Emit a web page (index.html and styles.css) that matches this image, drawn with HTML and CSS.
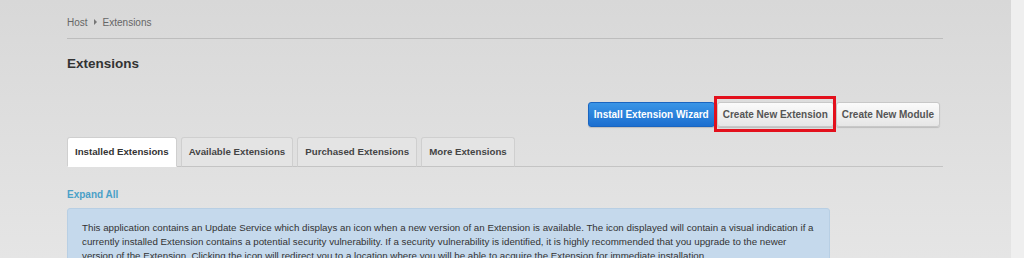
FILE: index.html
```html
<!DOCTYPE html>
<html lang="en">
<head>
    <meta charset="UTF-8">
    <title>Extensions</title>
    <link rel="stylesheet" href="styles.css">
</head>
<body>
    <div class="page">
        <div class="main">
            <div class="breadcrumb">
                <span>Host</span>
                <span class="sep"></span>
                <span>Extensions</span>
            </div>

            <h1>Extensions</h1>

            <div class="actions">
                <button class="btn btn-primary">Install Extension Wizard</button>
                <span class="highlight"><button class="btn">Create New Extension</button></span>
                <button class="btn">Create New Module</button>
            </div>

            <ul class="tabs">
                <li class="tab active">Installed Extensions</li>
                <li class="tab">Available Extensions</li>
                <li class="tab">Purchased Extensions</li>
                <li class="tab">More Extensions</li>
            </ul>

            <a class="expand" href="#">Expand All</a>

            <div class="info">
                This application contains an Update Service which displays an icon when a new version of an Extension is available. The icon displayed will contain a visual indication if a currently installed Extension contains a potential security vulnerability. If a security vulnerability is identified, it is highly recommended that you upgrade to the newer version of the Extension. Clicking the icon will redirect you to a location where you will be able to acquire the Extension for immediate installation.
            </div>
        </div>
        <div class="side"></div>
    </div>
</body>
</html>
```

FILE: styles.css
```css
body {
    margin: 0;
    font-family: 'Liberation Sans', Arial, sans-serif;
    color: #333;
    overflow: hidden;
}

.page {
    display: flex;
    height: 258px;
}

.main {
    flex: 1;
    padding: 0 68px 0 67px;
    background: linear-gradient(#d8d8d8, #e5e5e5);
    overflow: hidden;
}

.side {
    width: 13px;
    background: #efefef;
}

.breadcrumb {
    display: flex;
    align-items: center;
    gap: 6px;
    height: 39px;
    padding-top: 6px;
    box-sizing: border-box;
    border-bottom: 1px solid #bdbdbd;
    font-size: 10px;
    color: #666;
}

.sep {
    width: 0;
    height: 0;
    border-left: 3px solid #777;
    border-top: 3px solid transparent;
    border-bottom: 3px solid transparent;
}

h1 {
    margin: 17px 0 0;
    font-size: 13.5px;
    line-height: 16px;
    color: #333;
}

.actions {
    display: flex;
    justify-content: flex-end;
    gap: 2px;
    margin: 30px 3px 0 0;
}

.btn {
    height: 25px;
    padding: 0 5px;
    border: 1px solid #c8c8c8;
    border-radius: 3px;
    background: linear-gradient(#fbfbfb, #e6e6e6);
    box-shadow: 0 1px 1px rgba(0, 0, 0, 0.15);
    font-family: inherit;
    font-size: 10px;
    font-weight: bold;
    color: #555;
}

.btn-primary {
    border-color: #1a65c0;
    background: linear-gradient(#3a95e6, #1c6fd0);
    color: #fff;
}

.highlight {
    position: relative;
    display: flex;
}

.highlight::after {
    content: "";
    position: absolute;
    top: -6px;
    bottom: -5px;
    left: -3px;
    right: -2px;
    border: 3px solid #e3101c;
    pointer-events: none;
}

.tabs {
    display: flex;
    gap: 4px;
    margin: 10px 0 0;
    padding: 0;
    list-style: none;
    border-bottom: 1px solid #c4c4c4;
}

.tab {
    height: 28px;
    line-height: 28px;
    padding: 0 7px;
    margin-bottom: -1px;
    border: 1px solid #cfcfcf;
    border-bottom-color: #c4c4c4;
    border-radius: 3px 3px 0 0;
    background: #e4e4e4;
    font-size: 9.7px;
    font-weight: bold;
    color: #444;
}

.tab.active {
    background: #fff;
    border-bottom-color: #fff;
    color: #333;
}

.expand {
    display: block;
    margin-top: 22px;
    font-size: 10px;
    font-weight: bold;
    line-height: 12px;
    color: #4aa0c8;
    text-decoration: none;
}

.info {
    width: 763px;
    margin-top: 7px;
    padding: 12px 14px;
    box-sizing: border-box;
    border: 1px solid #b8cfe4;
    border-radius: 3px;
    background: #c5d9ec;
    font-size: 9.75px;
    line-height: 14px;
    color: #333;
}
```
